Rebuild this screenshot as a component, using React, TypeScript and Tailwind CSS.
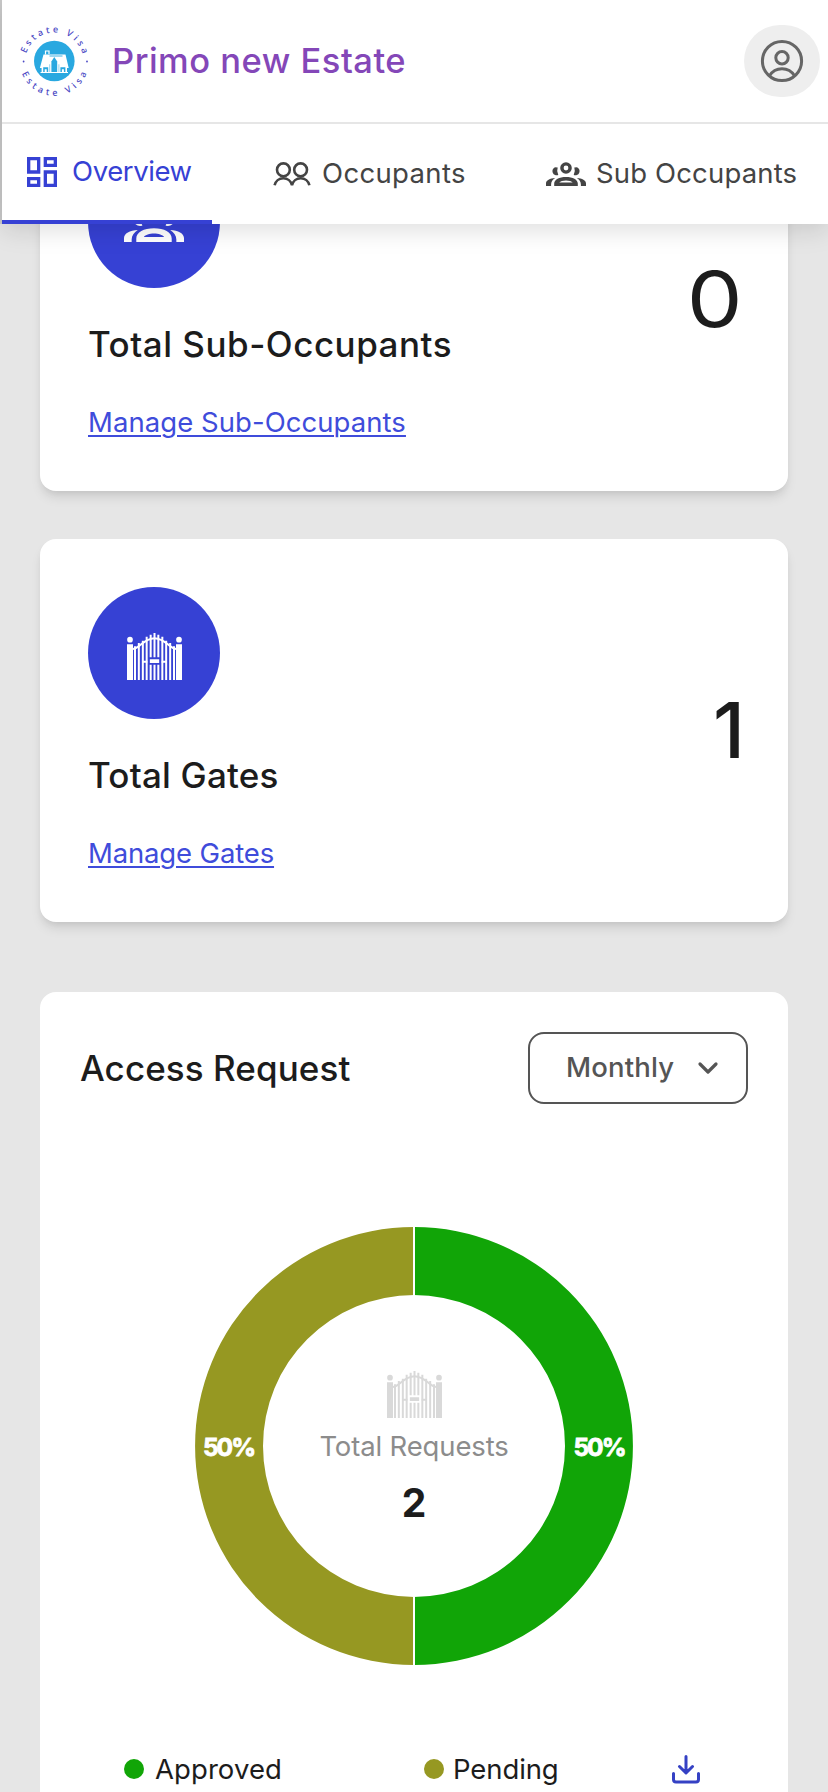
import type { ReactNode } from "react";
import { MdOutlineDashboard } from "react-icons/md";

function EstateLogo() {
  return (
    <svg width="76" height="76" viewBox="-2 -2 76 76" className="-m-0.5 shrink-0 overflow-visible">
      <defs>
        <path id="logo-top" d="M8.3 45.5 A29.3 29.3 0 1 1 64.3 45.5" />
        <path id="logo-bottom" d="M3.2 26 A34.6 34.6 0 1 0 69.4 26" />
      </defs>
      <circle cx="36.3" cy="36" r="20.3" fill="#29a8e0" />
      <path d="M27.5 29.5V26H31v3" fill="none" stroke="#fff" strokeWidth="1.2" />
      <path d="M25.5 29.5H47.500l3.200 13.500h-1.700v4.300H23.600V43h-1.700z" fill="#fff" />
      <path d="M31.500 31h13" stroke="#29a8e0" strokeWidth=".9" />
      <path d="M33.400 47.300V36.500l2.900-4.500 2.900 4.500v10.800z" fill="#29a8e0" />
      <path d="M31.700 47.300v-8M40.900 47.300v-8" stroke="#29a8e0" strokeWidth=".5" />
      <path d="M25.200 47.300v-5h5v5M42.400 47.300v-5h5v5" fill="#29a8e0" />
      <path d="M27.700 47.300v-3M44.900 47.300v-3" stroke="#fff" strokeWidth="2" />
      <path d="M22.500 47.500h27.500" stroke="#fff" strokeWidth="1" />
      <g fill="#4a48c4" className="font-['Noto_Sans'] text-[9px] font-medium">
        <text textAnchor="middle" letterSpacing="2.9">
          <textPath href="#logo-top" startOffset="51.5%">Estate Visa</textPath>
        </text>
        <text textAnchor="middle" letterSpacing="3.7">
          <textPath href="#logo-bottom" startOffset="51.5%">Estate Visa</textPath>
        </text>
      </g>
      <circle cx="5.600" cy="36.500" r=".9" fill="#4a48c4" />
      <circle cx="69" cy="36.500" r=".9" fill="#4a48c4" />
    </svg>
  );
}

function ProfileIcon() {
  return (
    <svg width="44" height="44" viewBox="0 0 44 44" fill="none" stroke="#666" strokeWidth="3">
      <circle cx="22" cy="22" r="19.6" />
      <circle cx="22" cy="18.8" r="6.2" />
      <path d="M9.5 36.8a14.5 14.5 0 0 1 25 0" />
    </svg>
  );
}

function OccupantsIcon() {
  return (
    <svg width="38" height="24" viewBox="0 0 38 24" fill="none" stroke="#444" strokeWidth="2.6">
      <circle cx="10.4" cy="7.8" r="6.4" />
      <circle cx="27.6" cy="7.8" r="6.4" />
      <path d="M1.6 23.2a8.900 8.900 0 0 1 17.400 0a8.900 8.900 0 0 1 17.400 0" />
    </svg>
  );
}

function GroupIcon({ className }: { className: string }) {
  return (
    <svg viewBox="0 0 40 24" className={className} fill="currentColor">
      <path fillRule="evenodd" d="M20 .2a5.8 5.8 0 1 1 0 11.6a5.8 5.8 0 0 1 0-11.6zm0 3.4a2.4 2.4 0 1 0 0 4.8a2.4 2.4 0 0 0 0-4.8z" />
      <path d="M11.7 5.6A9 9 0 0 0 12.3 13A4.200 4.200 0 1 1 9 5.200q1.600 0 2.700.4z" />
      <path d="M28.3 5.6A9 9 0 0 1 27.7 13A4.200 4.200 0 1 0 31 5.200q-1.600 0-2.700.4z" />
      <path fillRule="evenodd" d="M8.2 24v-2.400c0-4 5-6.700 11.800-6.700s11.800 2.700 11.800 6.700V24zM13.300 20.600h13.400c-1-1.300-3.600-2.200-6.700-2.200s-5.700.9-6.700 2.200z" />
      <path d="M0 24v-2.600c0-3.200 3.800-5 9.200-5.400C6.700 17.600 5.100 19.800 5.100 22.400V24z" />
      <path d="M40 24v-2.600c0-3.200-3.800-5-9.200-5.400 2.500 1.600 4.100 3.800 4.100 6.400V24z" />
    </svg>
  );
}

function GateIcon({ className }: { className: string }) {
  return (
    <svg width="55" height="47" viewBox="0 0 165 141" className={className} fill="currentColor">
      <circle cx="9" cy="20" r="8.5" />
      <circle cx="156" cy="20" r="8.5" />
      <path d="M0 34h18v107H0zM147 34h18v107h-18z" />
      <path d="M21 40h6v101h-6zM32.5 30h6v111h-6zM44.5 23h6v118h-6zM56 11h6v130h-6zM103 11h6v130h-6zM114.5 23h6v118h-6zM126.5 30h6v111h-6zM138 40h6v101h-6z" />
      <path d="M68 5h6v68h-6zM79.5 0h6v73h-6zM91 5h6v68h-6zM68 95h6v46h-6zM79.5 95h6v46h-6zM91 95h6v46h-6z" />
      <path d="M68.5 79h28v11h-28zM47 83h14v6H47zM104 83h14v6h-14z" />
      <path d="M18 48C38 47 50 16 82.5 16S127 47 147 48" fill="none" stroke="currentColor" strokeWidth="6" />
    </svg>
  );
}

function StatCard({ icon, title, titleClass, link, linkClass, value }: {
  icon: ReactNode; title: string; titleClass: string; link: string; linkClass: string; value: ReactNode;
}) {
  return (
    <section className="flex items-center justify-between rounded-2xl bg-white p-12 pr-[43px] shadow-[0_8px_12px_-2px_rgba(0,0,0,0.1),0_4px_8px_-4px_rgba(0,0,0,0.1)]">
      <div className="flex flex-col items-start">
        <div className="flex size-[132px] items-center justify-center rounded-full bg-[#3641d4] text-white">{icon}</div>
        <h2 className={`mt-8 text-[35px] leading-[48px] font-[450] whitespace-nowrap ${titleClass}`}>{title}</h2>
        <a className={`mt-[33px] text-[27.5px] leading-[42px] font-[390] whitespace-nowrap text-[#3f4cdb] underline decoration-2 underline-offset-[3px] ${linkClass}`}>{link}</a>
      </div>
      <div className="text-[77px] leading-none font-[450]">{value}</div>
    </section>
  );
}

function AccessDonut() {
  return (
    <div className="relative mx-auto mt-[123px] size-[438px]">
      <svg width="438" height="438" viewBox="0 0 438 438">
        <path d="M219 0a219 219 0 0 1 0 438v-68a151 151 0 0 0 0-302z" fill="#11a507" />
        <path d="M219 0a219 219 0 0 0 0 438v-68a151 151 0 0 1 0-302z" fill="#969822" />
        <path d="M219 0v68.5M219 369.5V438" stroke="#fff" strokeWidth="2" />
        <g fill="#fff" textAnchor="middle" stroke="#fff" strokeWidth=".8" className="text-[24.5px] font-bold tracking-[-2px]">
          <text x="33.500" y="228.500">50%</text>
          <text x="404" y="228.500">50%</text>
        </g>
      </svg>
      <div className="absolute inset-0 flex flex-col items-center pt-[144px]">
        <GateIcon className="text-[#d9d9d9]" />
        <span className="mt-[7px] text-[27.5px] leading-[42px] font-[390] tracking-[-0.15px] text-[#8c8c8c]">Total Requests</span>
        <span className="mt-3 text-[39px] leading-[48px] font-bold">2</span>
      </div>
    </div>
  );
}

export default function App() {
  return (
    <div className="flex h-[1792px] w-[828px] flex-col overflow-hidden bg-[#e6e6e6] font-['Inter',sans-serif] text-[#1c1c1c]">
      <div className="relative z-10 flex h-[224px] shrink-0">
        <div className="w-[2px] bg-[#c9c9c9]" />
        <div className="flex-1 bg-white shadow-[0_6px_24px_rgba(0,0,0,0.13)]">
          <header className="flex h-[124px] items-center justify-between border-b-2 border-[#e6e6e6] pr-2 pl-4">
            <div className="flex items-center">
              <EstateLogo />
              <h1 className="ml-[22px] text-[34.5px] leading-[48px] font-[450] tracking-[0.5px] text-[#8447b8]">Primo new Estate</h1>
            </div>
            <button className="flex h-[72px] w-[76px] items-center justify-center rounded-full bg-[#eee]"><ProfileIcon /></button>
          </header>
          <nav className="flex h-[100px] items-stretch text-[27.5px] font-[390] whitespace-nowrap text-[#444]">
            <div className="flex w-[210px] items-center border-b-4 border-[#3641d4] pl-5 text-[#3641d4]">
              <MdOutlineDashboard className="size-10" />
              <span className="ml-[10px] pb-px tracking-[-0.4px]">Overview</span>
            </div>
            <div className="ml-[61px] flex w-[273px] items-center">
              <OccupantsIcon />
              <span className="ml-[11px] pb-px tracking-[0.35px]">Occupants</span>
            </div>
            <div className="flex items-center">
              <GroupIcon className="h-6 w-10" />
              <span className="ml-[10px] pb-px tracking-[0.15px]">Sub Occupants</span>
            </div>
          </nav>
        </div>
      </div>

      <main className="-mt-[116px] flex flex-col px-10">
        <StatCard
          icon={<GroupIcon className="mt-[3px] h-9 w-[60px]" />}
          title="Total Sub-Occupants"
          titleClass="tracking-[0.5px]"
          link="Manage Sub-Occupants"
          linkClass="tracking-[0.06px]"
          value={<span className="mr-0.5 block origin-right scale-x-[1.15] font-[400]">0</span>}
        />
        <div className="mt-12">
          <StatCard
            icon={<GateIcon className="mt-1.5" />}
            title="Total Gates"
            titleClass="tracking-[0.2px]"
            link="Manage Gates"
            linkClass="tracking-[-0.15px]"
            value="1"
          />
        </div>

        <section className="mt-[70px] h-[840px] rounded-2xl bg-white pt-10">
          <div className="flex items-center justify-between px-10">
            <h2 className="text-[35px] leading-[48px] font-[450] tracking-[0.08px]">Access Request</h2>
            <button className="flex h-[72px] w-[220px] items-center rounded-2xl border-2 border-[#555] pl-[36px] text-[27.5px] font-[450] tracking-[0.16px] text-[#555]">
              Monthly
              <svg width="24" height="16" viewBox="0 0 24 16" className="ml-[22px]" fill="none" stroke="#555" strokeWidth="3.2" strokeLinecap="round" strokeLinejoin="round">
                <path d="M4 4l8 8 8-8" />
              </svg>
            </button>
          </div>
          <AccessDonut />
          <div className="mt-[83px] flex h-[42px] items-center pl-[84px] text-[27.5px] leading-[42px] font-[390]">
            <div className="flex w-[300px] items-center gap-[11px]">
              <span className="size-5 rounded-full bg-[#11a507]" />
              <span className="tracking-[0.08px]">Approved</span>
            </div>
            <div className="flex w-[247px] items-center gap-[9px]">
              <span className="size-5 rounded-full bg-[#969822]" />
              <span className="tracking-[-0.1px]">Pending</span>
            </div>
            <svg width="30" height="30" viewBox="0 0 30 30" fill="none" stroke="#3541c4" strokeWidth="3" strokeLinecap="round" strokeLinejoin="round">
              <path d="M15 2.5v16M8.5 12.5l6.500 6.500 6.500-6.500M2.500 19.500v6q0 2.500 2.500 2.500h20q2.500 0 2.500-2.500v-6" />
            </svg>
          </div>
        </section>
      </main>
    </div>
  );
}
